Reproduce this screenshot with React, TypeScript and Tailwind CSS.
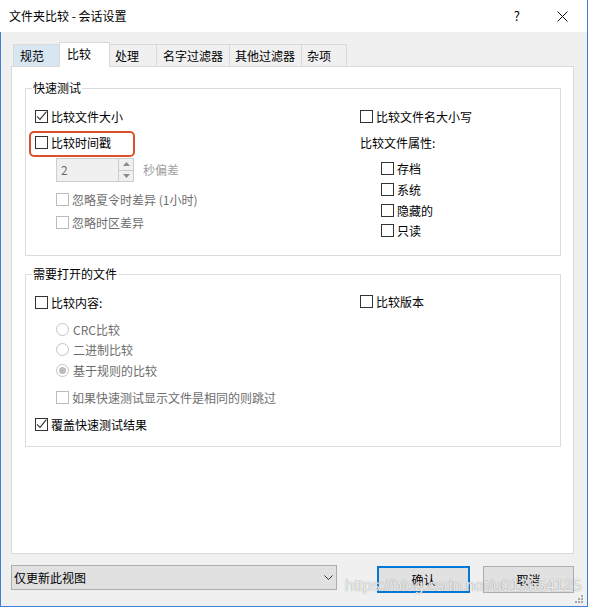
import React from 'react';

function Check({ checked = false, disabled = false }: { checked?: boolean; disabled?: boolean }) {
  return (
    <span
      className={
        disabled
          ? 'flex h-[13px] w-[13px] shrink-0 items-center justify-center border border-[#bcbcbc] bg-white'
          : 'flex h-[13px] w-[13px] shrink-0 items-center justify-center border border-[#333333] bg-white'
      }
    >
      {checked && (
        <svg width="11" height="11" viewBox="0 0 11 11">
          <path d="M1 5.3 L4 8.4 L10.4 0.6" fill="none" stroke="#333333" strokeWidth="1.1" />
        </svg>
      )}
    </span>
  );
}

function CB({ label, checked = false, disabled = false }: { label: string; checked?: boolean; disabled?: boolean }) {
  return (
    <div className="flex h-[13px] items-center gap-[3px]">
      <Check checked={checked} disabled={disabled} />
      <span className={disabled ? 'whitespace-nowrap leading-[13px] text-[#6d6d6d]' : 'whitespace-nowrap leading-[13px] text-black'}>
        {label}
      </span>
    </div>
  );
}

function Radio({ label, checked = false }: { label: string; checked?: boolean }) {
  return (
    <div className="flex h-[13px] items-center gap-[4px]">
      <span className="flex h-[13px] w-[13px] shrink-0 items-center justify-center rounded-full border border-[#c4c4c4] bg-white">
        {checked && <span className="h-[7px] w-[7px] rounded-full bg-[#bcbcbc]" />}
      </span>
      <span className="whitespace-nowrap leading-[13px] text-[#6d6d6d]">{label}</span>
    </div>
  );
}

export default function App() {
  return (
    <div className="relative flex h-[607px] w-[588px] flex-col bg-white font-['Noto_Sans_CJK_SC','Microsoft_YaHei',sans-serif] text-[12px] text-black">
      {/* title bar */}
      <div className="flex h-[32px] shrink-0 items-center border-r border-[#3c7fd5] bg-white pl-[9px] pr-[19px]">
        <span className="leading-[16px]">文件夹比较 - 会话设置</span>
        <span className="ml-auto text-[13px] leading-[16px]">?</span>
        <svg className="ml-[37px]" width="11" height="11" viewBox="0 0 11 11">
          <path d="M0.5 0.5 L10.5 10.5 M10.5 0.5 L0.5 10.5" stroke="#111" strokeWidth="1" />
        </svg>
      </div>

      {/* body */}
      <div className="flex flex-1 flex-col border-b border-l border-r border-[#3c7fd5] bg-[#f0f0f0] pl-[10px] pt-[10px]">
        {/* tabs */}
        <div className="ml-[2px] flex h-[24px] items-end">
          <div className="h-[22px] w-[46px] border-l border-t border-[#d9d9d9] bg-[#d8e6f2] pl-[6px] pt-[3px] leading-[16px]">规范</div>
          <div className="relative z-10 -mb-[1px] h-[25px] w-[51px] border border-b-0 border-[#d9d9d9] bg-white pl-[7px] pt-[3px] leading-[16px]">比较</div>
          <div className="h-[22px] w-[46px] border-t border-[#d9d9d9] pl-[5px] pt-[3px] leading-[16px]">处理</div>
          <div className="h-[22px] w-[73px] border-l border-t border-[#d9d9d9] pl-[6px] pt-[3px] leading-[16px]">名字过滤器</div>
          <div className="h-[22px] w-[72px] border-l border-t border-[#d9d9d9] pl-[5px] pt-[3px] leading-[16px]">其他过滤器</div>
          <div className="h-[22px] w-[46px] border-l border-r border-t border-[#d9d9d9] pl-[5px] pt-[3px] leading-[16px]">杂项</div>
        </div>

        {/* panel */}
        <div className="h-[488px] w-[563px] border border-[#d9d9d9] bg-white">
          {/* group 1 */}
          <div className="ml-[13px] mt-[21px] h-[168px] w-[536px] border border-[#dcdcdc]">
            <div className="-mt-[9px] ml-[6px] w-fit bg-white px-[1px] leading-[16px]">快速测试</div>
            <div className="flex pl-[9px]">
              <div className="w-[325px]">
                <div className="mt-[14px]">
                  <CB label="比较文件大小" checked />
                </div>
                <div className="relative mt-[13px]">
                  <CB label="比较时间戳" />
                  <div className="absolute -left-[6px] -top-[5px] h-[26px] w-[106px] rounded-[5px] border-2 border-[#db512b]" />
                </div>
                <div className="ml-[21px] mt-[9px] flex items-center">
                  <div className="flex h-[24px] w-[78px] border border-[#cccccc] bg-[#f0f0f0]">
                    <div className="flex-1 pl-[4px] leading-[22px] text-[#6d6d6d]">2</div>
                    <div className="flex w-[15px] flex-col">
                      <div className="flex flex-1 items-center justify-center border-b border-l border-[#cccccc]">
                        <svg width="7" height="4" viewBox="0 0 7 4">
                          <path d="M0 4 L3.5 0 L7 4 Z" fill="#8a8a8a" />
                        </svg>
                      </div>
                      <div className="flex flex-1 items-center justify-center border-l border-[#cccccc]">
                        <svg width="7" height="4" viewBox="0 0 7 4">
                          <path d="M0 0 L3.5 4 L7 0 Z" fill="#8a8a8a" />
                        </svg>
                      </div>
                    </div>
                  </div>
                  <span className="ml-[9px] leading-[16px] text-[#a0a0a0]">秒偏差</span>
                </div>
                <div className="ml-[21px] mt-[11px]">
                  <CB label="忽略夏令时差异 (1小时)" disabled />
                </div>
                <div className="ml-[21px] mt-[10px]">
                  <CB label="忽略时区差异" disabled />
                </div>
              </div>
              <div>
                <div className="mt-[14px]">
                  <CB label="比较文件名大小写" />
                </div>
                <div className="mt-[12px] leading-[16px]">比较文件属性:</div>
                <div className="ml-[21px] mt-[11px]">
                  <CB label="存档" />
                </div>
                <div className="ml-[21px] mt-[8px]">
                  <CB label="系统" />
                </div>
                <div className="ml-[21px] mt-[8px]">
                  <CB label="隐藏的" />
                </div>
                <div className="ml-[21px] mt-[7px]">
                  <CB label="只读" />
                </div>
              </div>
            </div>
          </div>

          {/* group 2 */}
          <div className="ml-[13px] mt-[18px] h-[173px] w-[536px] border border-[#dcdcdc]">
            <div className="-mt-[9px] ml-[6px] w-fit bg-white px-[1px] leading-[16px]">需要打开的文件</div>
            <div className="flex pl-[9px]">
              <div className="w-[325px]">
                <div className="mt-[14px]">
                  <CB label="比较内容:" />
                </div>
                <div className="ml-[21px] mt-[14px]">
                  <Radio label="CRC比较" />
                </div>
                <div className="ml-[21px] mt-[7px]">
                  <Radio label="二进制比较" />
                </div>
                <div className="ml-[21px] mt-[8px]">
                  <Radio label="基于规则的比较" checked />
                </div>
                <div className="ml-[21px] mt-[14px]">
                  <CB label="如果快速测试显示文件是相同的则跳过" disabled />
                </div>
                <div className="mt-[14px]">
                  <CB label="覆盖快速测试结果" checked />
                </div>
              </div>
              <div>
                <div className="mt-[13px]">
                  <CB label="比较版本" />
                </div>
              </div>
            </div>
          </div>
        </div>

        {/* bottom row */}
        <div className="mt-[11px] flex items-start">
          <div className="flex h-[25px] w-[326px] items-center justify-between border border-[#adadad] bg-[#e1e1e1] pl-[2px] pr-[3px]">
            <span className="leading-[16px]">仅更新此视图</span>
            <svg width="9" height="5" viewBox="0 0 9 5">
              <path d="M0.5 0.5 L4.5 4.5 L8.5 0.5" fill="none" stroke="#333" strokeWidth="1" />
            </svg>
          </div>
          <div className="ml-[40px] mt-[1px] flex h-[27px] w-[93px] items-center justify-center border-2 border-[#0078d7] bg-[#e1e1e1] leading-[16px]">
            确认
          </div>
          <div className="ml-[13px] mt-[1px] flex h-[27px] w-[91px] items-center justify-center border border-[#adadad] bg-[#e1e1e1] leading-[16px]">
            取消
          </div>
        </div>
      </div>

      {/* watermark overlay */}
      <div className="pointer-events-none absolute left-[345px] top-[577px] whitespace-nowrap font-['Liberation_Sans',sans-serif] text-[16px] leading-[18px] text-[rgba(255,255,255,0.85)] [text-shadow:0_0_1px_rgba(90,90,90,0.8)]">
        https://blog.csdn.net/u013654125
      </div>

      {/* resize grip */}
      <svg className="absolute left-[575px] top-[595px]" width="9" height="9" viewBox="0 0 9 9">
        <rect x="6" y="0" width="2" height="2" fill="#a8a8a8" />
        <rect x="3" y="3" width="2" height="2" fill="#a8a8a8" />
        <rect x="6" y="3" width="2" height="2" fill="#a8a8a8" />
        <rect x="0" y="6" width="2" height="2" fill="#a8a8a8" />
        <rect x="3" y="6" width="2" height="2" fill="#a8a8a8" />
        <rect x="6" y="6" width="2" height="2" fill="#a8a8a8" />
      </svg>
    </div>
  );
}
